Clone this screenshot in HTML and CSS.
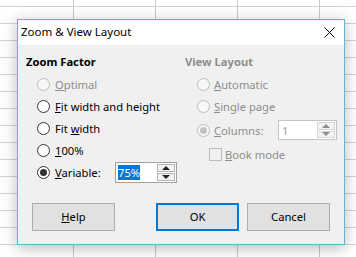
FILE: index.html
```html
<!DOCTYPE html>
<html lang="en">
<head>
    <meta charset="UTF-8">
    <title>Zoom &amp; View Layout</title>
    <link rel="stylesheet" href="styles.css">
</head>
<body>
<div class="dialog">
    <div class="titlebar">
        <span class="title">Zoom &amp; View Layout</span>
        <svg class="close" width="11" height="11" viewBox="0 0 11 11">
            <path d="M0.5 0.5 L10.5 10.5 M10.5 0.5 L0.5 10.5" stroke="#000" stroke-width="1"/>
        </svg>
    </div>
    <div class="content">
        <div class="columns">
            <div class="group">
                <div class="group-title">Zoom Factor</div>
                <div class="option disabled"><span class="radio"></span><span><u>O</u>ptimal</span></div>
                <div class="option"><span class="radio"></span><span><u>F</u>it width and height</span></div>
                <div class="option"><span class="radio"></span><span>Fit <u>w</u>idth</span></div>
                <div class="option"><span class="radio"></span><span><u>1</u>00%</span></div>
                <div class="option">
                    <span class="radio checked"></span>
                    <span class="spin-label variable"><u>V</u>ariable:</span>
                    <div class="spin spin-variable">
                        <span class="spin-text"><span class="selected">75%</span></span>
                        <span class="spin-arrows">
                            <span class="arrow-btn"><span class="arrow up"></span></span>
                            <span class="arrow-btn"><span class="arrow down"></span></span>
                        </span>
                    </div>
                </div>
            </div>
            <div class="group group-right disabled">
                <div class="group-title">View Layout</div>
                <div class="option"><span class="radio"></span><span><u>A</u>utomatic</span></div>
                <div class="option"><span class="radio"></span><span><u>S</u>ingle page</span></div>
                <div class="option option-columns">
                    <span class="radio checked"></span>
                    <span class="spin-label cols"><u>C</u>olumns:</span>
                    <div class="spin spin-columns">
                        <span class="spin-text">1</span>
                        <span class="spin-arrows">
                            <span class="arrow-btn"><span class="arrow up"></span></span>
                            <span class="arrow-btn"><span class="arrow down"></span></span>
                        </span>
                    </div>
                </div>
                <div class="option option-book"><span class="checkbox"></span><span><u>B</u>ook mode</span></div>
            </div>
        </div>
        <div class="buttons">
            <div class="btn btn-help"><u>H</u>elp</div>
            <div class="btn btn-default">OK</div>
            <div class="btn">Cancel</div>
        </div>
    </div>
</div>
</body>
</html>
```

FILE: styles.css
```css
body{
    margin: 0;
    padding: 0;
    width: 356px;
    height: 257px;
    overflow: hidden;
    background-color: #fff;
    background-image:
        linear-gradient(to right, transparent 81px, #c9c9c9 81px),
        linear-gradient(to bottom, transparent 16px, #d2d2d2 16px);
    background-size: 82px 100%, 100% 17px;
    background-position: -8px 0, 0 7px;
    font-family: "Noto Sans", "Open Sans", sans-serif;
    font-size: 11.2px;
    color: #000;
}
.dialog{
    box-sizing: border-box;
    width: 328px;
    height: 226px;
    margin: 19px 0 0 17px;
    border: 1px solid #5fb6d2;
    background-color: #f0f0f0;
    box-shadow: 0 3px 14px rgba(0, 0, 0, 0.28);
    display: flex;
    flex-direction: column;
}
.titlebar{
    height: 25px;
    background-color: #fff;
    display: flex;
    align-items: center;
    padding: 0 9px 2px 3px;
    box-sizing: border-box;
    font-size: 11.5px;
}
.title{
    flex: 1;
}
.close{
    display: block;
    margin-top: 2px;
}
.content{
    flex: 1;
    display: flex;
    flex-direction: column;
    padding: 9px 14px 13px 8px;
}
.columns{
    display: grid;
    grid-template-columns: 159px 1fr;
}
.group-title{
    font-weight: bold;
    line-height: 16px;
    height: 16px;
    margin-bottom: 3px;
}
.option{
    display: flex;
    align-items: center;
    height: 22px;
    padding-left: 11px;
}
.group-right .option{
    padding-left: 12px;
}
.option u, .btn u{
    text-underline-offset: 1px;
}
.radio{
    box-sizing: border-box;
    width: 13px;
    height: 13px;
    border: 1px solid #333;
    border-radius: 50%;
    background-color: #fff;
    margin-right: 5px;
    display: flex;
    align-items: center;
    justify-content: center;
    flex-shrink: 0;
}
.group-right .radio{
    margin-right: 4px;
}
.radio.checked::after{
    content: "";
    width: 7px;
    height: 7px;
    border-radius: 50%;
    background-color: #333;
}
.disabled .group-title,
.disabled{
    color: #8d8d8d;
}
.disabled .radio{
    border-color: #bcbcbc;
    background-color: #f7f7f7;
}
.disabled .radio.checked::after{
    background-color: #c2c2c2;
}
.option-columns{
    margin-top: 2px;
}
.option-book{
    margin-top: 2px;
    padding-left: 24px !important;
}
.checkbox{
    box-sizing: border-box;
    width: 13px;
    height: 13px;
    border: 1px solid #bcbcbc;
    background-color: #f0f0f0;
    margin-right: 3px;
}
.spin-label.variable{
    width: 60px;
}
.spin-label.cols{
    width: 64px;
}
.spin{
    box-sizing: border-box;
    display: flex;
    border: 1px solid #a0a0a0;
    background-color: #fff;
}
.spin-variable{
    width: 62px;
    height: 21px;
}
.spin-columns{
    width: 59px;
    height: 20px;
    border-color: #c4c4c4;
}
.spin-text{
    flex: 1;
    display: flex;
    align-items: center;
    padding-left: 2px;
}
.spin-columns .spin-text{
    padding-left: 3px;
    color: #9a9aa8;
}
.selected{
    background-color: #0078d7;
    color: #fff;
    line-height: 15px;
}
.spin-arrows{
    width: 18px;
    display: flex;
    flex-direction: column;
    padding: 1px;
    gap: 1px;
}
.arrow-btn{
    flex: 1;
    box-sizing: border-box;
    border: 1px solid #b4b4b4;
    background-color: #f3f3f3;
    display: flex;
    align-items: center;
    justify-content: center;
}
.spin-columns .arrow-btn{
    border-color: #d6d6d6;
}
.arrow{
    width: 0;
    height: 0;
    border-left: 4px solid transparent;
    border-right: 4px solid transparent;
}
.arrow.up{
    border-bottom: 4px solid #222;
}
.arrow.down{
    border-top: 4px solid #222;
}
.spin-columns .arrow.up{
    border-bottom-color: #8d8d8d;
}
.spin-columns .arrow.down{
    border-top-color: #8d8d8d;
}
.buttons{
    margin-top: auto;
    display: flex;
    gap: 8px;
    padding-left: 6px;
}
.btn{
    box-sizing: border-box;
    width: 83px;
    height: 28px;
    border: 1px solid #adadad;
    background-color: #e1e1e1;
    display: flex;
    align-items: center;
    justify-content: center;
    padding-bottom: 1px;
}
.btn-help{
    margin-right: auto;
}
.btn-default{
    border: 2px solid #0078d7;
}
```
